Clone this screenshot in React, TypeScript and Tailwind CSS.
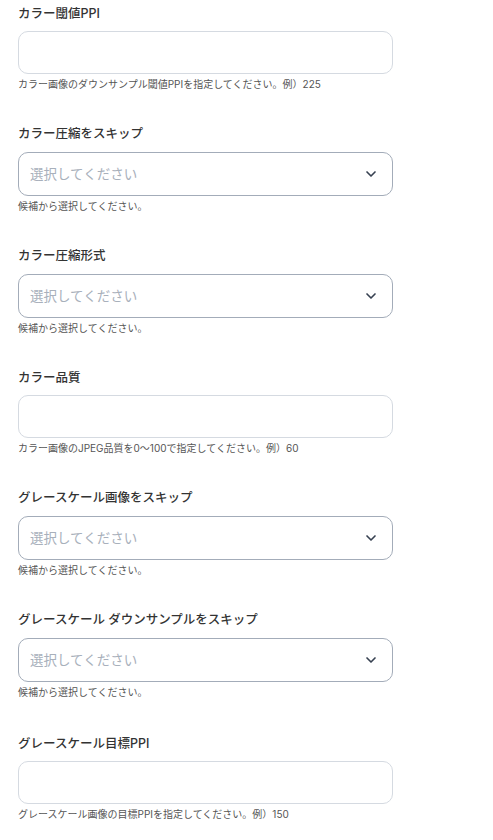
import { ChevronDown } from "lucide-react";

type Field =
  | { kind: "text"; label: string; help: string }
  | { kind: "select"; label: string; help: string };

const fields: Field[] = [
  { kind: "text", label: "カラー閾値PPI", help: "カラー画像のダウンサンプル閾値PPIを指定してください。例）225" },
  { kind: "select", label: "カラー圧縮をスキップ", help: "候補から選択してください。" },
  { kind: "select", label: "カラー圧縮形式", help: "候補から選択してください。" },
  { kind: "text", label: "カラー品質", help: "カラー画像のJPEG品質を0〜100で指定してください。例）60" },
  { kind: "select", label: "グレースケール画像をスキップ", help: "候補から選択してください。" },
  { kind: "select", label: "グレースケール ダウンサンプルをスキップ", help: "候補から選択してください。" },
  { kind: "text", label: "グレースケール目標PPI", help: "グレースケール画像の目標PPIを指定してください。例）150" },
];

function FormField({ field }: { field: Field }) {
  return (
    <div className="flex flex-col">
      <label className="h-[18px] text-[12.5px] leading-[18px] font-medium text-[#333]">{field.label}</label>
      {field.kind === "text" ? (
        <input
          type="text"
          className="mt-[8px] h-[43px] w-[375px] rounded-[10px] border border-[#d5dae1] bg-white px-3 text-[13px] outline-none"
        />
      ) : (
        <div className="mt-[9px] flex h-[44px] w-[375px] items-center justify-between rounded-[10px] border border-[#a3acb9] bg-white pl-[11px] pr-[13px]">
          <span className="text-[13.5px] text-[#a8b0bb]">選択してください</span>
          <ChevronDown className="h-4 w-4 text-[#374151]" strokeWidth={2.5} />
        </div>
      )}
      <p className="mt-[3px] h-[14px] text-[10px] leading-[14px] text-[#555]">{field.help}</p>
    </div>
  );
}

export default function App() {
  return (
    <div
      className="min-h-screen bg-white pl-[18px] pt-[5px]"
      style={{ fontFamily: '"Inter", "Noto Sans CJK JP", sans-serif' }}
    >
      <div className="flex flex-col gap-[34px]">
        {fields.map((f, i) => (
          <div key={f.label} className={i === 6 ? "mt-[2px]" : ""}>
            <FormField field={f} />
          </div>
        ))}
      </div>
    </div>
  );
}
